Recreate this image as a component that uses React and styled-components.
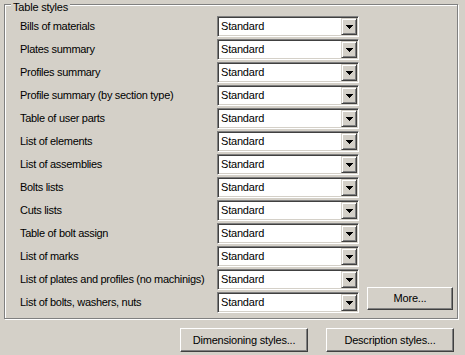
import React from "react";
import styled, { createGlobalStyle } from "styled-components";

const Global = createGlobalStyle`
  html, body { margin: 0; padding: 0; background: #d4d0c8; }
  body { font-family: "Liberation Sans", Arial, sans-serif; font-size: 11px; color: #000; }
`;

const Page = styled.div`
  width: 465px;
  height: 355px;
  box-sizing: border-box;
  padding: 4px 0 0 4px;
  background: #d4d0c8;
  overflow: hidden;
`;

const Group = styled.div`
  position: relative;
  width: 454px;
  box-sizing: border-box;
  border: 1px solid #808080;
  box-shadow: inset 1px 1px 0 #fff, 1px 1px 0 #fff;
  padding: 11px 0 5px 15px;
  display: grid;
  grid-template-columns: 197px 142px 94px;
  grid-auto-rows: 21px;
  row-gap: 2px;
`;

const Legend = styled.div`
  position: absolute;
  top: -4px;
  left: 6px;
  padding: 0 2px;
  line-height: 13px;
  background: #d4d0c8;
  letter-spacing: -0.2px;
`;

const Label = styled.div`
  grid-column: 1;
  display: flex;
  align-items: center;
  white-space: nowrap;
  line-height: 13px;
  letter-spacing: -0.3px;
`;

const Combo = styled.div`
  grid-column: 2;
  box-sizing: border-box;
  height: 21px;
  border-style: solid;
  border-width: 1px;
  border-color: #808080 #fff #fff #808080;
  box-shadow: inset 1px 1px 0 #404040, inset -1px -1px 0 #d4d0c8;
  background: #fff;
  display: flex;
  align-items: center;
  padding: 1px;
`;

const ComboText = styled.div`
  flex: 1;
  padding-left: 2px;
  line-height: 13px;
  letter-spacing: -0.2px;
`;

const ArrowBtn = styled.div`
  box-sizing: border-box;
  width: 16px;
  height: 17px;
  background: #d4d0c8;
  border-style: solid;
  border-width: 1px;
  border-color: #d4d0c8 #404040 #404040 #d4d0c8;
  box-shadow: inset 1px 1px 0 #fff, inset -1px -1px 0 #808080;
  display: flex;
  align-items: center;
  justify-content: center;
`;

const Button = styled.div`
  box-sizing: border-box;
  width: ${(p) => p.$w}px;
  height: ${(p) => p.$h || 23}px;
  background: #d4d0c8;
  border-style: solid;
  border-width: 1px;
  border-color: #fff #404040 #404040 #fff;
  box-shadow: inset -1px -1px 0 #808080;
  display: flex;
  align-items: center;
  justify-content: center;
  white-space: nowrap;
  line-height: 13px;
  letter-spacing: -0.2px;
`;

const MoreCell = styled.div`
  grid-column: 3;
  margin-top: -5px;
  padding-left: 8px;
`;

const Footer = styled.div`
  display: flex;
  justify-content: flex-end;
  gap: 18px;
  margin-top: 9px;
  padding-right: 11px;
`;

const Arrow = () => (
  <svg width="7" height="4" viewBox="0 0 7 4" shapeRendering="crispEdges">
    <path d="M0 0h7v1H0zM1 1h5v1H1zM2 2h3v1H2zM3 3h1v1H3z" fill="#000" />
  </svg>
);

const rows = [
  "Bills of materials",
  "Plates summary",
  "Profiles summary",
  "Profile summary (by section type)",
  "Table of user parts",
  "List of elements",
  "List of assemblies",
  "Bolts lists",
  "Cuts lists",
  "Table of bolt assign",
  "List of marks",
  "List of plates and profiles (no machinigs)",
  "List of bolts, washers, nuts",
];

export default function App() {
  return (
    <Page>
      <Global />
      <Group>
        <Legend>Table styles</Legend>
        {rows.map((r, i) => (
          <React.Fragment key={r}>
            <Label>{r}</Label>
            <Combo>
              <ComboText>Standard</ComboText>
              <ArrowBtn>
                <Arrow />
              </ArrowBtn>
            </Combo>
            {i === rows.length - 1 && (
              <MoreCell>
                <Button $w={86} $h={23}>More...</Button>
              </MoreCell>
            )}
          </React.Fragment>
        ))}
      </Group>
      <Footer>
        <Button $w={128} $h={24}>Dimensioning styles...</Button>
        <Button $w={128} $h={24}>Description styles...</Button>
      </Footer>
    </Page>
  );
}
